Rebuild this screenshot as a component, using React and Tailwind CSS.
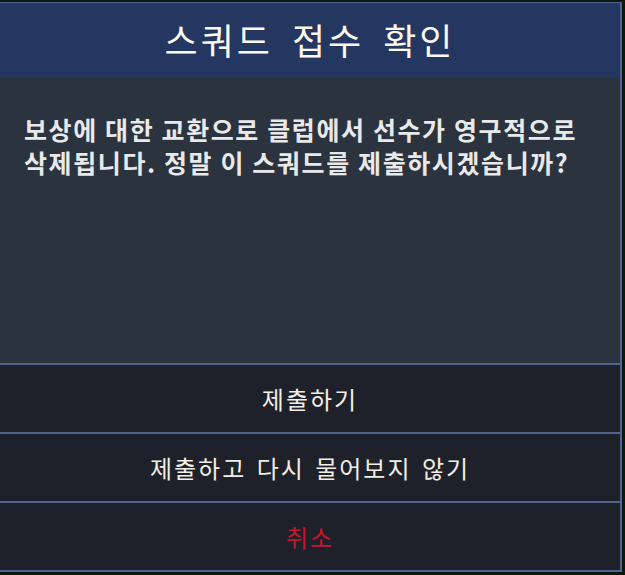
import React from "react";

const font = { fontFamily: '"Noto Sans CJK KR", "Noto Sans", sans-serif' };

export default function App() {
  const buttons = [
    { label: "제출하기", color: "text-[#f2eee6]" },
    { label: "제출하고 다시 물어보지 않기", color: "text-[#f2eee6]" },
    { label: "취소", color: "text-[#c8152d]" },
  ];

  return (
    <div className="w-[625px] h-[575px] bg-[#0c170d] pt-[2px]" style={font}>
      <div className="w-[622px] border-t border-r-2 border-b-2 border-[#4f6590] flex flex-col">
        <div className="h-[74px] bg-[#233760] flex items-center justify-center pb-[2px]">
          <h1 className="text-[36px] text-[#fdf8ec] tracking-[3px] [word-spacing:8px]">스쿼드 접수 확인</h1>
        </div>
        <div className="h-[286px] bg-[#2a333e] pl-6 pr-3 pt-[36px]">
          <p className="text-[25px] leading-[33px] font-bold text-[#e9e9e9] tracking-[1.6px]">
            보상에 대한 교환으로 클럽에서 선수가 영구적으로 삭제됩니다. 정말 이 스쿼드를 제출하시겠습니까?
          </p>
        </div>
        {buttons.map((b, i) => (
          <button
            key={i}
            className={`h-[69px] border-t-2 border-[#4f6590] bg-[#1e2129] flex items-center justify-center text-[24px] tracking-[2px] [word-spacing:3px] ${b.color}`}
          >
            {b.label}
          </button>
        ))}
      </div>
    </div>
  );
}
